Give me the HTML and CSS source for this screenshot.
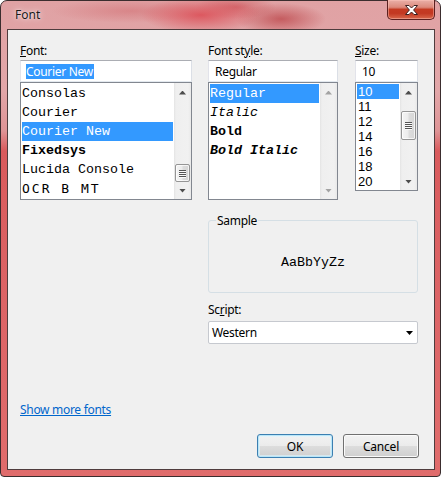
FILE: index.html
```html
<!DOCTYPE html>
<html>
<head>
<meta charset="utf-8">
<title>Font</title>
<link rel="stylesheet" href="styles.css">
</head>
<body>
<div class="window">
  <div class="titlebar">
    <span class="title">Font</span>
    <div class="close">
      <svg width="13" height="10" viewBox="0 0 13 10"><polygon points="0.5,0.5 4,0.5 6.5,3 9,0.5 12.5,0.5 8.6,5 12.5,9.5 9,9.5 6.5,7 4,9.5 0.5,9.5 4.4,5" fill="#fff" stroke="#3b2020" stroke-width="1" stroke-linejoin="round"/></svg>
    </div>
  </div>
  <div class="client">
    <div class="pickers">
      <div class="picker picker-font">
        <div class="lbl"><u>F</u>ont:</div>
        <div class="textbox"><span class="sel">Courier New</span></div>
        <div class="listbox lb-tall">
          <ul class="items mono-items">
            <li>Consolas</li>
            <li>Courier</li>
            <li class="on">Courier New</li>
            <li class="b">Fixedsys</li>
            <li>Lucida Console</li>
            <li class="ocr">OCR B MT</li>
          </ul>
          <div class="vscroll">
            <span class="sbtn"><span class="arr up"></span></span>
            <span class="track track-font"><span class="thumb thumb-font"><i></i><i></i><i></i><i></i></span></span>
            <span class="sbtn"><span class="arr down"></span></span>
          </div>
        </div>
      </div>
      <div class="picker picker-style">
        <div class="lbl">Font st<u>y</u>le:</div>
        <div class="textbox"><span class="plain">Regular</span></div>
        <div class="listbox lb-tall">
          <ul class="items mono-items">
            <li class="on">Regular</li>
            <li class="i">Italic</li>
            <li class="b">Bold</li>
            <li class="b i">Bold Italic</li>
          </ul>
          <div class="vscroll disabled">
            <span class="sbtn"><span class="arr up"></span></span>
            <span class="track"></span>
            <span class="sbtn"><span class="arr down"></span></span>
          </div>
        </div>
      </div>
      <div class="picker picker-size">
        <div class="lbl"><u>S</u>ize:</div>
        <div class="textbox"><span class="plain">10</span></div>
        <div class="listbox lb-short">
          <ul class="items size-items">
            <li class="on">10</li>
            <li>11</li>
            <li>12</li>
            <li>14</li>
            <li>16</li>
            <li>18</li>
            <li>20</li>
          </ul>
          <div class="vscroll">
            <span class="sbtn"><span class="arr up"></span></span>
            <span class="track track-size"><span class="thumb thumb-size"><i></i><i></i><i></i><i></i></span></span>
            <span class="sbtn"><span class="arr down"></span></span>
          </div>
        </div>
      </div>
    </div>
    <div class="lower">
      <div class="groupbox">
        <span class="group-label">Sample</span>
        <div class="sample">AaBbYyZz</div>
      </div>
      <div class="lbl script-lbl">Sc<u>r</u>ipt:</div>
      <div class="combo"><span>Western</span><span class="caret"></span></div>
    </div>
    <div class="link-row"><a class="more" href="#">Show more fonts</a></div>
    <div class="buttons">
      <button class="btn btn-default">OK</button>
      <button class="btn">Cancel</button>
    </div>
  </div>
</div>
</body>
</html>
```
FILE: styles.css
```css
html, body {
  margin: 0;
  padding: 0;
  background: #ffffff;
}
body {
  font-family: "Noto Sans", "Open Sans", sans-serif;
  font-size: 12px;
  line-height: 15px;
  letter-spacing: -0.3px;
  color: #000;
}
.window {
  width: 441px;
  height: 477px;
  box-sizing: border-box;
  border: 1px solid #3b2d2e;
  border-radius: 7px 7px 4px 4px;
  padding: 0 5px 6px 6px;
  display: flex;
  flex-direction: column;
  background:
    radial-gradient(ellipse 60px 18px at 200px 14px, rgba(220,80,88,.9), rgba(220,80,88,0)),
    radial-gradient(ellipse 45px 16px at 280px 18px, rgba(185,62,66,.7), rgba(185,62,66,0)),
    radial-gradient(ellipse 40px 12px at 235px 6px, rgba(200,70,76,.6), rgba(200,70,76,0)),
    radial-gradient(ellipse 80px 12px at 130px 10px, rgba(210,110,114,.55), rgba(210,110,114,0)),
    linear-gradient(180deg, #e0a2a4 0px, #e2a6a8 90px, #de9496 130px, #d95a5c 150px, #dc6466 300px, #e06c6c 100%);
}
.titlebar {
  height: 28px;
  display: flex;
  align-items: flex-start;
}
.title {
  margin: 6px 0 0 8px;
  color: #1a1a1a;
  letter-spacing: 0;
  text-shadow: 0 0 6px rgba(255,255,255,.9), 0 0 2px rgba(255,255,255,.7);
}
.close {
  margin: -1px 0 0 auto;
  width: 48px;
  height: 20px;
  box-sizing: border-box;
  border: 1px solid #5a2020;
  border-top: none;
  border-radius: 0 0 5px 5px;
  background: linear-gradient(180deg, #eab0a8 0%, #dc8a7c 38%, #c43a22 50%, #c23822 70%, #d8684c 100%);
  box-shadow: inset 0 0 0 1px rgba(255,200,190,.45);
  display: flex;
  align-items: center;
  justify-content: center;
}
.close svg { display: block; margin-left: 1px; }
.client {
  flex: 1;
  border: 1px solid #4e3c3d;
  background: #f0f0f0;
  padding: 13px 15px 11px 12px;
  display: flex;
  flex-direction: column;
}
.pickers {
  display: flex;
  gap: 16px;
  align-items: flex-start;
}
.picker-font { width: 172px; }
.picker-style { width: 130px; }
.picker-size { width: 63px; margin-left: 1px; }
.lbl {
  height: 15px;
  margin-bottom: 2px;
  white-space: nowrap;
}
.textbox {
  height: 22px;
  box-sizing: border-box;
  border: 1px solid;
  border-color: #abadb3 #dbdfe6 #e3e9ef #e2e3ea;
  background: #fff;
  padding: 3px 0 0 5px;
  white-space: nowrap;
  overflow: hidden;
}
.textbox .sel {
  display: inline-block;
  background: #3399ff;
  color: #fff;
  padding: 0 1px 0 0;
}
.textbox .plain { display: inline-block; padding-left: 1px; }
.listbox {
  box-sizing: border-box;
  border: 1px solid #828790;
  background: #fff;
  display: flex;
}
.lb-tall { height: 118px; }
.lb-short { height: 109px; }
.items {
  list-style: none;
  margin: 0;
  padding: 1px;
  flex: 1;
  overflow: hidden;
}
.items li {
  white-space: nowrap;
}
.mono-items li {
  font-family: "Liberation Mono", "Courier New", monospace;
  font-size: 13.33px;
  letter-spacing: 0;
  height: 19px;
  line-height: 19px;
}
.mono-items li.b { font-weight: bold; }
.mono-items li.i { font-style: italic; }
.mono-items li.ocr { letter-spacing: 2px; font-family: "DejaVu Sans Mono", monospace; font-size: 13px; }
.size-items li {
  height: 15px;
  line-height: 15px;
  padding-left: 1px;
  font-family: "Liberation Sans", Arial, sans-serif;
  font-size: 13px;
  letter-spacing: 0;
}
.items li.on {
  background: #3399ff;
  color: #fff;
}
.vscroll {
  width: 17px;
  display: flex;
  flex-direction: column;
  background: linear-gradient(90deg, #e4e4e4 0, #efefef 2px, #f1f1f1 14px, #e9e9e9 100%);
}
.sbtn {
  height: 17px;
  flex: none;
  display: flex;
  align-items: center;
  justify-content: center;
}
.arr {
  width: 7px;
  height: 4px;
  background: #4d4d4d;
}
.arr.up { clip-path: polygon(50% 0, 100% 100%, 0 100%); margin-top: 2px; }
.arr.down { clip-path: polygon(0 0, 100% 0, 50% 100%); margin-top: 0; }
.disabled .arr { background: #a3a3a3; }
.track {
  flex: 1;
  display: flex;
  flex-direction: column;
  padding: 0 1px;
}
.track-font { justify-content: flex-end; }
.track-size { padding-top: 11px; }
.thumb {
  box-sizing: border-box;
  border: 1px solid #959595;
  border-radius: 2px;
  background: linear-gradient(90deg, #f4f4f4 0%, #ececec 45%, #dcdcdc 55%, #d6d6d6 100%);
  box-shadow: inset 0 0 0 1px rgba(255,255,255,.7);
  display: flex;
  flex-direction: column;
  align-items: center;
  justify-content: center;
  gap: 1px;
}
.thumb-font { height: 18px; }
.thumb-size { height: 29px; }
.thumb i {
  display: block;
  width: 7px;
  height: 1px;
  background: #555;
  box-shadow: 0 1px 0 #fafafa;
}
.lower {
  margin-left: 188px;
  width: 210px;
}
.groupbox {
  margin-top: 20px;
  height: 73px;
  box-sizing: border-box;
  border: 1px solid #d5dfe5;
  border-radius: 3px;
  display: flex;
  flex-direction: column;
}
.group-label {
  margin: -8px 0 0 7px;
  padding: 0 1px;
  background: #f0f0f0;
  align-self: flex-start;
}
.sample {
  flex: 1;
  display: flex;
  align-items: center;
  justify-content: center;
  padding-top: 4px;
  font-family: "Liberation Mono", "Courier New", monospace;
  font-size: 13.33px;
  letter-spacing: 0;
}
.script-lbl {
  margin-top: 9px;
  margin-bottom: 4px;
}
.combo {
  height: 23px;
  box-sizing: border-box;
  border: 1px solid #c6c9cf;
  border-radius: 2px;
  background: #fff;
  padding: 0 4px 0 3px;
  display: flex;
  align-items: center;
  justify-content: space-between;
}
.caret {
  width: 7px;
  height: 4px;
  background: #000;
  clip-path: polygon(0 0, 100% 0, 50% 100%);
  margin-top: 1px;
}
.link-row {
  margin-top: 58px;
  height: 15px;
}
.more {
  color: #0066cc;
  text-decoration: underline;
}
.buttons {
  margin-top: 17px;
  display: flex;
  justify-content: flex-end;
  gap: 10px;
}
.btn {
  width: 76px;
  height: 24px;
  box-sizing: border-box;
  margin: 0;
  padding: 0;
  font-family: inherit;
  font-size: 12px;
  letter-spacing: -0.2px;
  color: #000;
  border: 1px solid #707070;
  border-radius: 3px;
  background: linear-gradient(180deg, #f2f2f2 0%, #ebebeb 50%, #dddddd 51%, #cfcfcf 100%);
  box-shadow: inset 0 0 0 1px #fbfbfb;
}
.btn-default {
  border-color: #3c7fb1;
  box-shadow: inset 0 0 0 1px #b9e6f8, inset 0 0 0 2px rgba(220,245,255,.6);
}
```
